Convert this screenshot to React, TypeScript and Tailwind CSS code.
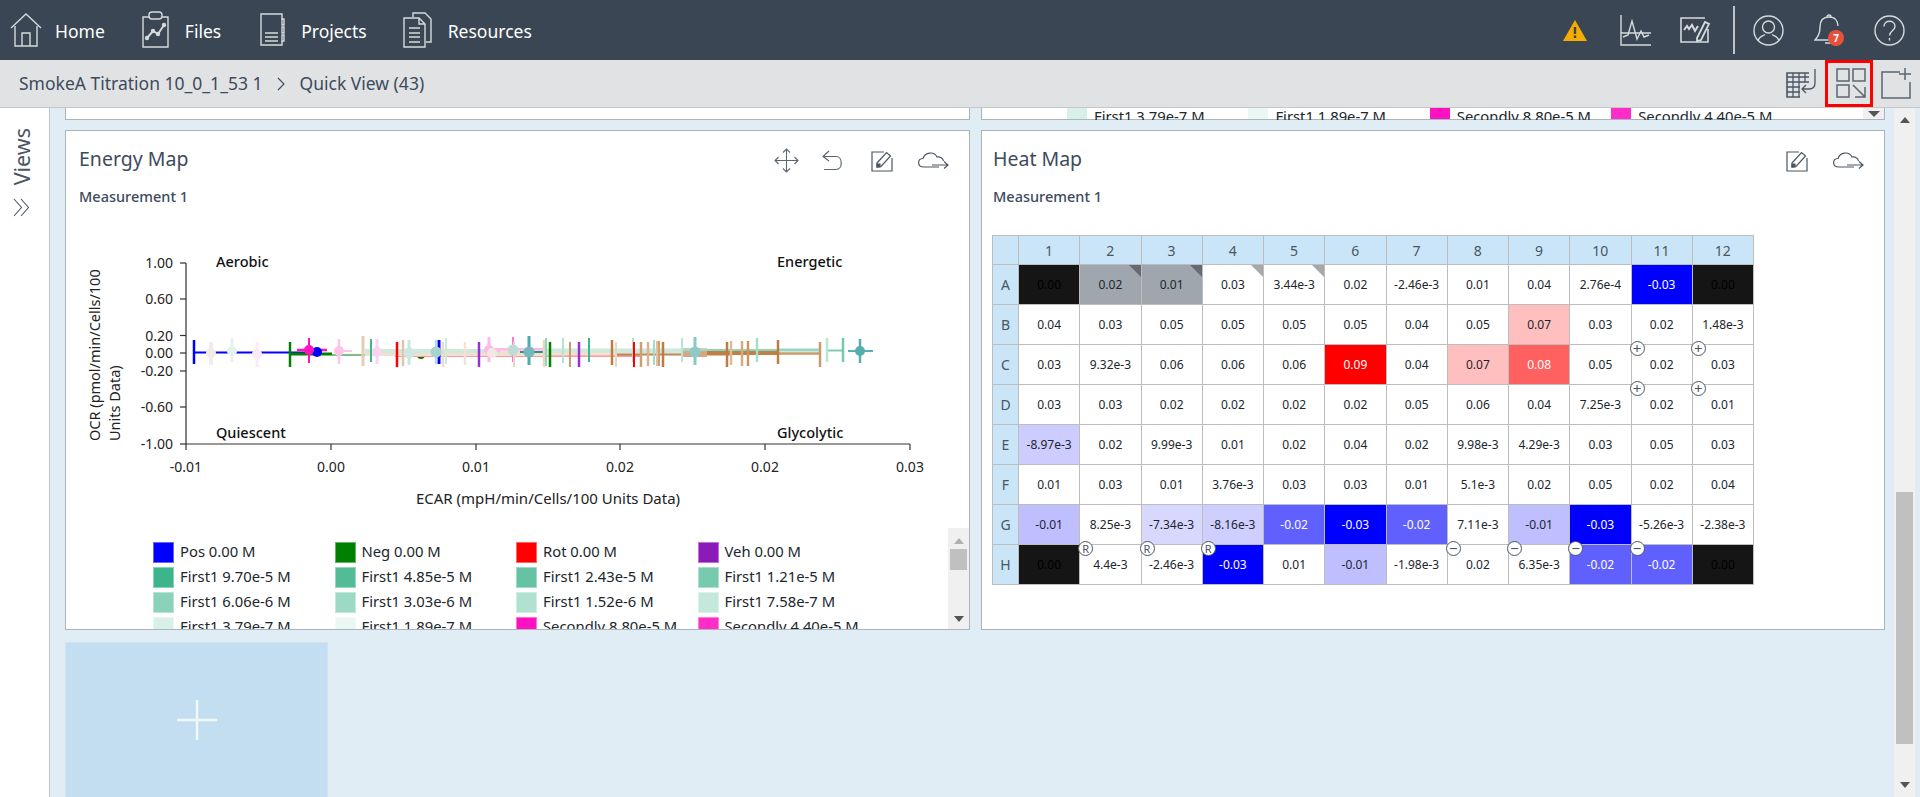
import React from 'react'

type CellTone = '' | 'k' | 'g' | 'b' | 'h' | 'l' | 'm' | 'n' | 'o' | 'r' | 'p' | 'q'
type Cell = { v: string; tone?: CellTone; mark?: string; corner?: 'dark' | 'light' }

const toneClass: Record<string, string> = {
  '': 'bg-white text-[#20262c]',
  k: 'bg-[#151515] text-black',
  g: 'bg-[#9fa6ad] text-[#20262c]',
  b: 'bg-[#0000ff] text-white',
  h: 'bg-[#6060ff] text-white',
  l: 'bg-[#bfbfff] text-[#20262c]',
  m: 'bg-[#ccccff] text-[#20262c]',
  n: 'bg-[#d8d8ff] text-[#20262c]',
  o: 'bg-[#cfcfff] text-[#20262c]',
  r: 'bg-[#ff0000] text-white',
  p: 'bg-[#ffbfbf] text-[#20262c]',
  q: 'bg-[#ff6060] text-white',
}

const c = (v: string, tone: CellTone = '', mark?: string, corner?: 'dark' | 'light'): Cell => ({ v, tone, mark, corner })

const heatRows: { row: string; cells: Cell[] }[] = [
  { row: 'A', cells: [c('0.00', 'k'), c('0.02', 'g', undefined, 'dark'), c('0.01', 'g', undefined, 'dark'), c('0.03', '', undefined, 'light'), c('3.44e-3', '', undefined, 'light'), c('0.02'), c('-2.46e-3'), c('0.01'), c('0.04'), c('2.76e-4'), c('-0.03', 'b'), c('0.00', 'k')] },
  { row: 'B', cells: [c('0.04'), c('0.03'), c('0.05'), c('0.05'), c('0.05'), c('0.05'), c('0.04'), c('0.05'), c('0.07', 'p'), c('0.03'), c('0.02'), c('1.48e-3')] },
  { row: 'C', cells: [c('0.03'), c('9.32e-3'), c('0.06'), c('0.06'), c('0.06'), c('0.09', 'r'), c('0.04'), c('0.07', 'p'), c('0.08', 'q'), c('0.05'), c('0.02', '', '+'), c('0.03', '', '+')] },
  { row: 'D', cells: [c('0.03'), c('0.03'), c('0.02'), c('0.02'), c('0.02'), c('0.02'), c('0.05'), c('0.06'), c('0.04'), c('7.25e-3'), c('0.02', '', '+'), c('0.01', '', '+')] },
  { row: 'E', cells: [c('-8.97e-3', 'm'), c('0.02'), c('9.99e-3'), c('0.01'), c('0.02'), c('0.04'), c('0.02'), c('9.98e-3'), c('4.29e-3'), c('0.03'), c('0.05'), c('0.03')] },
  { row: 'F', cells: [c('0.01'), c('0.03'), c('0.01'), c('3.76e-3'), c('0.03'), c('0.03'), c('0.01'), c('5.1e-3'), c('0.02'), c('0.05'), c('0.02'), c('0.04')] },
  { row: 'G', cells: [c('-0.01', 'l'), c('8.25e-3'), c('-7.34e-3', 'n'), c('-8.16e-3', 'o'), c('-0.02', 'h'), c('-0.03', 'b'), c('-0.02', 'h'), c('7.11e-3'), c('-0.01', 'l'), c('-0.03', 'b'), c('-5.26e-3'), c('-2.38e-3')] },
  { row: 'H', cells: [c('0.00', 'k'), c('4.4e-3', '', 'R'), c('-2.46e-3', '', 'R'), c('-0.03', 'b', 'R'), c('0.01'), c('-0.01', 'l'), c('-1.98e-3'), c('0.02', '', '−'), c('6.35e-3', '', '−'), c('-0.02', 'h', '−'), c('-0.02', 'h', '−'), c('0.00', 'k')] },
]

const legend = [
  { label: 'Pos 0.00 M', color: 'bg-[#0000ff]' },
  { label: 'Neg 0.00 M', color: 'bg-[#008000]' },
  { label: 'Rot 0.00 M', color: 'bg-[#ff0000]' },
  { label: 'Veh 0.00 M', color: 'bg-[#8c1ab8]' },
  { label: 'First1 9.70e-5 M', color: 'bg-[#3cb58a]' },
  { label: 'First1 4.85e-5 M', color: 'bg-[#52bc97]' },
  { label: 'First1 2.43e-5 M', color: 'bg-[#65c3a3]' },
  { label: 'First1 1.21e-5 M', color: 'bg-[#77caae]' },
  { label: 'First1 6.06e-6 M', color: 'bg-[#8ad2b9]' },
  { label: 'First1 3.03e-6 M', color: 'bg-[#9ddac5]' },
  { label: 'First1 1.52e-6 M', color: 'bg-[#b1e1d0]' },
  { label: 'First1 7.58e-7 M', color: 'bg-[#c4e9dc]' },
  { label: 'First1 3.79e-7 M', color: 'bg-[#d8f0e8]' },
  { label: 'First1 1.89e-7 M', color: 'bg-[#ebf7f3]' },
  { label: 'Secondly 8.80e-5 M', color: 'bg-[#ff10c0]' },
  { label: 'Secondly 4.40e-5 M', color: 'bg-[#ff2cc8]' },
]

// x1, x2, y, colour, width
const hLines: [number, number, number, string, number][] = [
  [194, 320, 352.5, '#0000ff', 2],
  [290, 332, 354, '#008000', 3],
  [332, 420, 355, '#7fbf7f', 2],
  [297, 327, 350, '#ff10c0', 2.5],
  [339, 352, 351, '#ffc4ec', 2],
  [395, 640, 356, '#ff9a9a', 2],
  [365, 545, 351, '#cfe9dd', 4],
  [365, 545, 354.5, '#eee0d2', 3],
  [490, 545, 350, '#ffb8ea', 4],
  [500, 545, 353, '#f0e0d0', 5],
  [520, 545, 352, '#2a9090', 2],
  [545, 682, 351, '#cfe9dd', 5],
  [545, 615, 354, '#eee0d2', 3],
  [615, 730, 354.5, '#bf8450', 2],
  [682, 707, 351, '#a8d8c6', 6],
  [682, 707, 354, '#d4a880', 6],
  [707, 778, 350, '#8fd3b8', 2],
  [707, 778, 353, '#c07f45', 4],
  [778, 820, 350, '#9ad6bf', 3],
  [778, 820, 353.5, '#c99a6a', 2.5],
  [827, 843, 350.5, '#7fcdb0', 2],
  [848, 873, 351, '#5ab0b0', 2],
]

// x, y1, y2, colour, width
const vBars: [number, number, number, string, number][] = [
  [194, 340, 364, '#0000ff', 2.5],
  [211, 342, 365, '#f3ece6', 4],
  [232, 338, 362, '#e6f1f1', 3],
  [257, 342, 367, '#fdeaf8', 3],
  [290, 342, 367, '#008000', 2.5],
  [309, 338, 363, '#ff10c0', 2],
  [339, 339, 364, '#ffc4ec', 2.5],
  [363, 336, 366, '#e2cdb8', 3],
  [371, 339, 362, '#40b88a', 2],
  [377, 339, 364, '#fbd4f2', 3],
  [397, 342, 367, '#ff0000', 2.5],
  [403, 340, 366, '#dfc4ab', 2.5],
  [409, 340, 365, '#c4e8dc', 3],
  [439, 340, 364, '#0000ff', 3],
  [436, 340, 364, '#b8dcd8', 2.5],
  [443, 342, 367, '#eddccc', 2.5],
  [446, 338, 364, '#c8ebde', 2],
  [465, 342, 365, '#f2e3d6', 2.5],
  [479, 342, 367, '#9b30d0', 2.5],
  [489, 337, 362, '#ffb8ea', 3],
  [513, 337, 362, '#ff7ad8', 2],
  [514, 342, 367, '#ecd4be', 2],
  [529, 336, 365, '#4ea8ae', 3],
  [544, 340, 367, '#ecd4be', 2.5],
  [546, 338, 366, '#90d8bd', 2],
  [550, 342, 367, '#008000', 2.5],
  [563, 338, 363, '#b5e3d2', 2],
  [570, 342, 367, '#c99a6a', 2],
  [579, 342, 367, '#9b30d0', 2.5],
  [589, 338, 362, '#3cb88a', 2],
  [612, 340, 365, '#b97d45', 2.5],
  [616, 342, 367, '#ecd4be', 2],
  [633, 338, 362, '#a9e0cb', 2],
  [634, 342, 367, '#ff0000', 2],
  [641, 342, 367, '#cda072', 2.5],
  [648, 342, 366, '#d8b48e', 2.5],
  [654, 340, 365, '#a4dbc5', 2],
  [657, 341, 366, '#e0c0a0', 2],
  [659, 341, 366, '#d0a070', 2],
  [663, 342, 367, '#b97d45', 2.5],
  [682, 338, 362, '#b8e6d5', 2],
  [695, 337, 365, '#88c8c6', 3],
  [727, 342, 367, '#b97d45', 2.5],
  [731, 341, 365, '#dcbb98', 2.5],
  [742, 341, 366, '#d4ab80', 2.5],
  [748, 341, 366, '#c99560', 2.5],
  [757, 338, 362, '#a5dfc8', 2.5],
  [778, 340, 364, '#b97d45', 2.5],
  [820, 342, 367, '#c99a6a', 2.5],
  [827, 338, 362, '#b8e6d5', 2.5],
  [843, 338, 362, '#73c9a9', 2.5],
  [860, 339, 363, '#56adae', 2.5],
]

// x, y, colour, radius
const markers: [number, number, string, number][] = [
  [211, 353, '#f3ece6', 5],
  [232, 351, '#e6f1f1', 5],
  [257, 354, '#fdeaf8', 5],
  [317, 352, '#0000ff', 5],
  [309, 350, '#ff10c0', 5],
  [339, 351, '#ffc4ec', 5],
  [377, 352, '#fbd4f2', 5],
  [409, 353, '#cfe6e2', 5.5],
  [436, 352, '#a8d4d0', 5.5],
  [489, 350, '#ffb8ea', 5],
  [492, 353, '#f2e8de', 5],
  [513, 350, '#bcdcd8', 5.5],
  [529, 352, '#73b8bc', 5.5],
  [695, 352, '#8fc8c6', 5.5],
  [860, 351, '#56adae', 5],
]

const yTicks: [string, number][] = [['1.00', 263], ['0.60', 299], ['0.20', 335.5], ['0.00', 353], ['-0.20', 371], ['-0.60', 407], ['-1.00', 444]]
const xTicks: [string, number][] = [['-0.01', 186], ['0.00', 331], ['0.01', 476], ['0.02', 620], ['0.02', 765], ['0.03', 910]]

function HomeIcon() {
  return (
    <svg width="32" height="36" viewBox="0 0 32 36" fill="none" stroke="#d5dade" strokeWidth="1.4">
      <path d="M1 16 16 2l15 14M5 14v20h22V14M12 34V21h8v13" />
    </svg>
  )
}

function FilesIcon() {
  return (
    <svg width="28" height="38" viewBox="0 0 28 38" fill="none" stroke="#d5dade" strokeWidth="1.4">
      <path d="M8 6H2v30h25V6h-6" />
      <rect x="8" y="1" width="13" height="7" rx="3" />
      <path d="m6 27 6-7 5 3 6-9" strokeWidth="2" />
      <circle cx="6" cy="27" r="1.5" fill="#d5dade" />
      <circle cx="12" cy="20" r="1.5" fill="#d5dade" />
      <circle cx="17" cy="23" r="1.5" fill="#d5dade" />
      <circle cx="23" cy="14" r="1.5" fill="#d5dade" />
    </svg>
  )
}

function ProjectsIcon() {
  return (
    <svg width="25" height="34" viewBox="0 0 25 34" fill="none" stroke="#d5dade" strokeWidth="1.4">
      <path d="M22 6V1H1v31h21v-4" />
      <path d="M22 6h2v6h-2zM22 14h2v6h-2zM22 22h2v6h-2zM5 20h13M5 24h13M5 28h13" />
    </svg>
  )
}

function ResourcesIcon() {
  return (
    <svg width="30" height="36" viewBox="0 0 30 36" fill="none" stroke="#d5dade" strokeWidth="1.4">
      <path d="M10 5V1h12l6 6v23h-5" />
      <path d="M1 6h15l6 6v23H1zM16 6v6h6M6 16h11M6 21h11M6 25h11M6 30h11" />
    </svg>
  )
}

function EditIcon() {
  return (
    <svg width="22" height="22" viewBox="0 0 22 22" fill="none" stroke="#4a5663" strokeWidth="1.2">
      <path d="M13 2H1v19h20V8" />
      <path d="M6 13 15.5 2.5l4 3.5L10 16.5l-4 .5z" />
      <path d="M6 14h3v3H6z" fill="#4a5663" />
    </svg>
  )
}

function CloudIcon() {
  return (
    <svg width="31" height="18" viewBox="0 0 31 18" fill="none" stroke="#4a5663" strokeWidth="1.2">
      <path d="M21 15H6C-1 15-1 7 5 6.500 7 0 16-1 19 5c3-.5 6 1 6.500 4" />
      <path d="M14 13h16m-4-3.500 4 3.500-4 3.500" />
    </svg>
  )
}

function CardHeader({ title, pad, children }: { title: string; pad: string; children: React.ReactNode }) {
  return (
    <>
      <div className={`flex items-center justify-between h-[56px] pr-[20px] ${pad}`}>
        <span className="text-[19.5px] text-[#3d4b5c]">{title}</span>
        <div className="flex items-center mt-[3px]">{children}</div>
      </div>
      <div className={`h-[19px] leading-[19px] text-[14.5px] font-medium text-[#3d4b5c] ${pad}`}>Measurement 1</div>
    </>
  )
}

function EnergyChart() {
  return (
    <svg width="903" height="313" viewBox="66 215 903 313" className="block shrink-0 mt-[9px]">
      <g stroke="#333" strokeWidth="1.2" fill="none">
        <path d="M186 263V444H910" />
        {yTicks.map(([label, y]) => <path key={label} d={`M180 ${y}H186`} />)}
        {xTicks.map(([label, x]) => <path key={x} d={`M${x} 444V450`} />)}
      </g>
      <circle cx="421" cy="355" r="4" fill="#008000" />
      {hLines.map(([x1, x2, y, color, w], i) => (
        <line key={i} x1={x1} x2={x2} y1={y} y2={y} stroke={color} strokeWidth={w} />
      ))}
      {vBars.map(([x, y1, y2, color, w], i) => (
        <line key={i} x1={x} x2={x} y1={y1} y2={y2} stroke={color} strokeWidth={w} />
      ))}
      {markers.map(([x, y, color, r], i) => (
        <circle key={i} cx={x} cy={y} r={r} fill={color} />
      ))}
      <g fontSize="14" fill="#222" style={{ fontFamily: '"Noto Sans", sans-serif' }}>
        {yTicks.map(([label, y]) => (
          <text key={label} x="173" y={y + 5} textAnchor="end">{label}</text>
        ))}
        {xTicks.map(([label, x]) => (
          <text key={x} x={x} y="472" textAnchor="middle">{label}</text>
        ))}
        <text x="548" y="504" textAnchor="middle" fontSize="15">ECAR (mpH/min/Cells/100 Units Data)</text>
        <text transform="translate(100 441) rotate(-90)" fontSize="14.5">OCR (pmol/min/Cells/100</text>
        <text transform="translate(120 441) rotate(-90)" fontSize="14.5">Units Data)</text>
        <g fontWeight="500" fill="#111" fontSize="14.5">
          <text x="216" y="267">Aerobic</text>
          <text x="216" y="438">Quiescent</text>
          <text x="777" y="267">Energetic</text>
          <text x="777" y="438">Glycolytic</text>
        </g>
      </g>
    </svg>
  )
}

function LegendScrollbar({ children }: { children?: React.ReactNode }) {
  return (
    <div className="w-[21px] shrink-0 bg-[#f0f0f0] flex flex-col items-center relative">{children}</div>
  )
}

function HeatTable() {
  return (
    <div className="grid grid-cols-[25px_repeat(12,minmax(0,1fr))] gap-px p-px bg-[#bdbdbd] w-[762px] text-[12px]">
      <div className="h-[28px] bg-[#c9e5f7]" />
      {Array.from({ length: 12 }, (_, i) => (
        <div key={i} className="h-[28px] bg-[#c9e5f7] text-[#4a5663] text-[14px] flex items-center justify-center">{i + 1}</div>
      ))}
      {heatRows.map(({ row, cells }) => (
        <React.Fragment key={row}>
          <div className="h-[39px] bg-[#c9e5f7] text-[#4a5663] text-[14px] flex items-center justify-center">{row}</div>
          {cells.map((cell, i) => (
            <div key={i} className={`h-[39px] relative flex items-center justify-center ${toneClass[cell.tone ?? '']}`}>
              {cell.v}
              {cell.corner === 'dark' && (
                <span className="absolute top-0 right-0 w-0 h-0 border-t-[12px] border-l-[12px] border-t-[#666b73] border-l-transparent" />
              )}
              {cell.corner === 'light' && (
                <span className="absolute top-0 right-0 w-0 h-0 border-t-[12px] border-l-[12px] border-t-[#a8a8a8] border-l-transparent" />
              )}
              {cell.mark && (
                <span className={`absolute -top-[4px] -left-[2px] w-[15px] h-[15px] rounded-full bg-white border border-[#4a5663] text-[#4a5663] leading-none flex items-center justify-center ${cell.mark === 'R' ? 'text-[11px]' : 'text-[15px]'}`}>{cell.mark}</span>
              )}
            </div>
          ))}
        </React.Fragment>
      ))}
    </div>
  )
}

export default function App() {
  return (
    <div className="h-screen w-full overflow-hidden flex flex-col bg-white" style={{ fontFamily: '"Noto Sans", sans-serif' }}>
      {/* top nav */}
      <header className="h-[60px] shrink-0 bg-[#3a4653] flex items-center text-white text-[17.5px]">
        <div className="pl-[10px] flex items-center">
          <HomeIcon />
          <span className="ml-[13px] mt-[2px]">Home</span>
        </div>
        <div className="ml-[36px] flex items-center">
          <FilesIcon />
          <span className="ml-[16px] mt-[2px]">Files</span>
        </div>
        <div className="ml-[39px] flex items-center">
          <ProjectsIcon />
          <span className="ml-[16px] mt-[2px]">Projects</span>
        </div>
        <div className="ml-[36px] flex items-center">
          <ResourcesIcon />
          <span className="ml-[15px] mt-[2px]">Resources</span>
        </div>
        <div className="ml-auto flex items-center pr-[15px]">
          <svg width="24" height="21" viewBox="0 0 24 21">
            <path d="M12 0 24 21H0z" fill="#f5ad00" />
            <path d="M10.800 7h2.400v7h-2.400zM10.800 15.500h2.400V18h-2.400z" fill="#3a4653" />
          </svg>
          <svg className="ml-[33px]" width="31" height="31" viewBox="0 0 31 31" fill="none" stroke="#d5dade" strokeWidth="1.4">
            <path d="M1 0v30h30M1 18h30" />
            <path d="m3 22 5-2 4-14 5 18 4-8 3 6 5-2" />
          </svg>
          <svg className="ml-[29px]" width="31" height="26" viewBox="0 0 31 26" fill="none" stroke="#d5dade" strokeWidth="1.4">
            <path d="M25 1H1v24h27V12" strokeWidth="1.600" />
            <path d="m4 13 3-4 2 3 3-4 3 6 3-5" strokeWidth="2" />
            <path d="m17 21 8-16 4 2-8 16-4 1z" fill="#3a4653" strokeWidth="1.800" />
          </svg>
          <div className="ml-[22px] w-[2px] h-[48px] bg-[#c0c4c8]" />
          <svg className="ml-[18px]" width="31" height="31" viewBox="0 0 31 31" fill="none" stroke="#d5dade" strokeWidth="1.4">
            <circle cx="15.500" cy="15.500" r="14.500" />
            <circle cx="15.500" cy="12" r="6" />
            <path d="M5 26c1-5 5-5 7-6.500M26 26c-1-5-5-5-7-6.500" />
          </svg>
          <div className="ml-[30px] relative w-[30px] h-[32px]">
            <svg width="30" height="32" viewBox="0 0 30 32" fill="none" stroke="#d5dade" strokeWidth="1.4">
              <path d="M15 3c-6 0-9 4-9 10 0 7-2 10-5 13h23" />
              <path d="M15 3c6 0 9 4 9 9M13 3a2 2 0 0 1 4 0M11 29h8" />
            </svg>
            <span className="absolute left-[14px] top-[16px] w-[16px] h-[16px] rounded-full bg-[#e8503a] text-white text-[10px] font-bold flex items-center justify-center">7</span>
          </div>
          <svg className="ml-[30px]" width="31" height="31" viewBox="0 0 31 31" fill="none" stroke="#d5dade" strokeWidth="1.4">
            <circle cx="15.500" cy="15.500" r="14.500" />
            <path d="M10 11.500c0-7 11-7 11 0 0 4-5.500 4.500-5.500 9" />
            <path d="M15.500 23v2.500" />
          </svg>
        </div>
      </header>

      {/* breadcrumb bar */}
      <div className="h-[48px] shrink-0 bg-[#e1e2e4] border-b border-[#c4c6c8] flex items-center text-[17.5px] text-[#3d4b5c]">
        <span className="ml-[19px]">SmokeA Titration 10_0_1_53 1</span>
        <svg className="ml-[15px]" width="9" height="14" viewBox="0 0 9 14" fill="none" stroke="#3d4b5c" strokeWidth="1.1">
          <path d="m1 1 6 6-6 6" />
        </svg>
        <span className="ml-[13px]">Quick View (43)</span>
        <div className="ml-auto flex items-center pr-[8px]">
          <svg width="31" height="31" viewBox="0 0 31 31" fill="none" stroke="#4a5663" strokeWidth="1.3">
            <path d="M23 5H1v24h13" strokeWidth="1.600" />
            <path d="M1 9h22M1 14h22M1 19h13M1 24h13M7 5v24M13 5v24M19 5v9M29 1v14c0 5-3 6-6 6h-7m4-4-4 4 4 4" />
          </svg>
          <div className="ml-[8px] w-[48px] h-[47px] border-[3px] border-[#ff0000] flex items-center justify-center pl-[4px]">
            <svg width="31" height="31" viewBox="0 0 31 31" fill="none" stroke="#5b6670" strokeWidth="1.5">
              <path d="M1 1h12v12H1zM17 1h12v12H17zM1 17h12v12H1zM17 17l12 12m-10 0h10V19" />
            </svg>
          </div>
          <svg className="ml-[8px]" width="31" height="31" viewBox="0 0 31 31" fill="none" stroke="#5b6670" strokeWidth="1.5">
            <path d="M19 4H1v26h28V14M24 0v12M18 6h12" />
          </svg>
        </div>
      </div>

      <div className="flex-1 min-h-0 flex">
        {/* views rail */}
        <aside className="w-[50px] shrink-0 bg-white border-r border-[#c0c4c8] flex flex-col items-center pt-[20px] pr-[6px] text-[#4a5663]">
          <span className="text-[21.5px] leading-none [writing-mode:vertical-rl] rotate-180">Views</span>
          <svg className="mt-[13px]" width="17" height="19" viewBox="0 0 17 19" fill="none" stroke="#4a5663" strokeWidth="1.1">
            <path d="m1 1 7.500 8.500L1 18M8 1l7.500 8.500L8 18" />
          </svg>
        </aside>

        <main className="flex-1 min-w-0 bg-[#e0edf5] flex overflow-hidden">
          <div className="w-[1844px] shrink-0 pl-[15px] flex flex-col">
            {/* cards scrolled past the top */}
            <div className="flex gap-[11px] h-[12px] shrink-0 overflow-hidden">
              <div className="w-[905px] bg-white border-x border-b border-[#a9b4bd]" />
              <div className="w-[904px] bg-white border-x border-b border-[#a9b4bd] flex">
                <div className="flex-1 grid grid-cols-[repeat(4,181.4px)] pl-[85px] text-[14.8px] text-[#20262c]">
                  {legend.slice(12).map((item) => (
                    <div key={item.label} className="flex items-start h-[12px] overflow-hidden">
                      <span className={`w-[20px] h-[11px] shrink-0 ${item.color}`} />
                      <span className="ml-[7px] mt-[1px] leading-[14px] whitespace-nowrap">{item.label}</span>
                    </div>
                  ))}
                </div>
                <LegendScrollbar>
                  <span className="mt-[3px] w-0 h-0 border-x-[6px] border-t-[6px] border-x-transparent border-t-[#555]" />
                </LegendScrollbar>
              </div>
            </div>

            <div className="mt-[10px] flex gap-[11px] h-[500px] shrink-0">
              <section className="w-[905px] bg-white border border-[#a9b4bd] flex flex-col overflow-hidden">
                <CardHeader title="Energy Map" pad="pl-[13px]">
                  <svg width="25" height="25" viewBox="0 0 25 25" fill="none" stroke="#5b6670" strokeWidth="1.1">
                    <path d="M12.500 1v23M1 12.500h23M9 4.500 12.500 1 16 4.500M9 20.500l3.500 3.500 3.500-3.500M4.500 9 1 12.500 4.500 16M20.500 9l3.500 3.500-3.500 3.500" />
                  </svg>
                  <svg className="ml-[23px]" width="21" height="21" viewBox="0 0 21 21" fill="none" stroke="#5b6670" strokeWidth="1.2">
                    <path d="M7 1 1 6.500 7 11M1 6.500h13c7 0 7 13 0 13H2" />
                  </svg>
                  <span className="ml-[28px] block h-[22px]"><EditIcon /></span>
                  <span className="ml-[25px] block h-[18px]"><CloudIcon /></span>
                </CardHeader>
                <EnergyChart />
                <div className="flex-1 min-h-0 flex">
                  <div className="flex-1 overflow-hidden pt-[14px] pl-[87px] grid grid-cols-[repeat(4,181.5px)] auto-rows-[25px] text-[14.8px] text-[#20262c]">
                    {legend.map((item) => (
                      <div key={item.label} className="flex items-start">
                        <span className={`w-[21px] h-[21px] shrink-0 border border-white/40 ${item.color}`} />
                        <span className="ml-[6px] leading-[19px] whitespace-nowrap">{item.label}</span>
                      </div>
                    ))}
                  </div>
                  <LegendScrollbar>
                    <span className="mt-[10px] w-0 h-0 border-x-[5px] border-b-[6px] border-x-transparent border-b-[#b0b0b0]" />
                    <span className="mt-[5px] w-[17px] h-[21px] bg-[#c0c0c0]" />
                    <span className="mt-auto mb-[7px] w-0 h-0 border-x-[5px] border-t-[6px] border-x-transparent border-t-[#555]" />
                  </LegendScrollbar>
                </div>
              </section>

              <section className="w-[904px] bg-white border border-[#a9b4bd] flex flex-col overflow-hidden">
                <CardHeader title="Heat Map" pad="pl-[11px]">
                  <EditIcon />
                  <span className="ml-[25px] block h-[18px]"><CloudIcon /></span>
                </CardHeader>
                <div className="pl-[10px] pt-[29px]">
                  <HeatTable />
                </div>
              </section>
            </div>

            <div className="mt-[12px] flex-1 w-[263px] bg-[#c3def0] border border-[#cfe4f2] border-b-0 flex items-center justify-center">
              <svg width="42" height="42" viewBox="0 0 42 42" stroke="#f2f8fc" strokeWidth="2.5" strokeLinecap="round">
                <path d="M21 2v38M2 21h38" />
              </svg>
            </div>
          </div>

          {/* page scrollbar */}
          <div className="w-[21px] shrink-0 bg-[#f0f0f0] flex flex-col items-center">
            <span className="mt-[9px] w-0 h-0 border-x-[5px] border-b-[6px] border-x-transparent border-b-[#555]" />
            <span className="mt-[369px] w-[17px] h-[252px] bg-[#c0c0c0]" />
            <span className="mt-auto mb-[9px] w-0 h-0 border-x-[5px] border-t-[6px] border-x-transparent border-t-[#555]" />
          </div>
        </main>
      </div>
    </div>
  )
}
